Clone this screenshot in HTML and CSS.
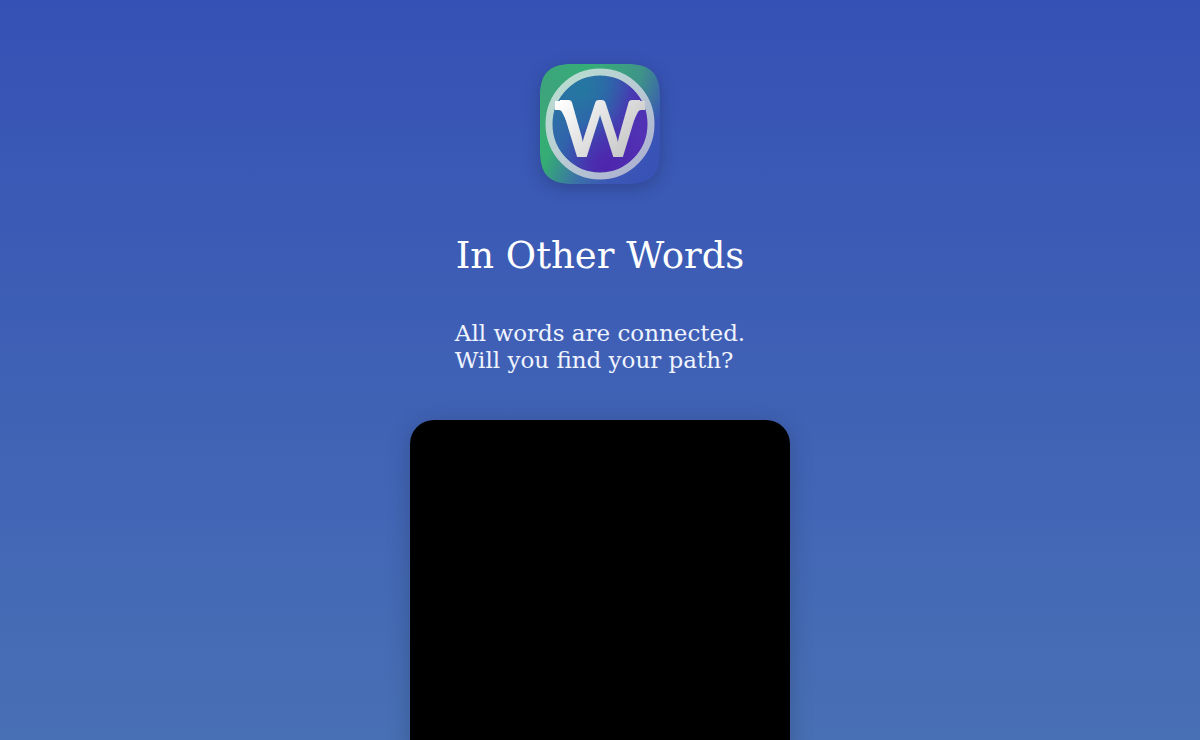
FILE: index.html
```
<!DOCTYPE html>
<html lang="en">
<head>
  <meta charset="UTF-8" />
  <meta name="viewport" content="width=device-width, initial-scale=1.0"/>
  <title>In Other Words</title>
  <link rel="stylesheet" href="styles.css">
</head>
<body>
  <main class="container">
    <svg class="app-icon" viewBox="0 0 120 120" role="img" aria-label="In Other Words app icon">
      <defs>
        <clipPath id="iconShape">
          <path d="M0 34C0 9 9 0 34 0H86C111 0 120 9 120 34V86C120 111 111 120 86 120H34C9 120 0 111 0 86Z" />
        </clipPath>
        <clipPath id="disc">
          <ellipse cx="60" cy="60" rx="50" ry="52" />
        </clipPath>
        <linearGradient id="base" x1="0" y1="0.3" x2="1" y2="0.7">
          <stop offset="0" stop-color="#35b56c" />
          <stop offset="0.22" stop-color="#35ab76" />
          <stop offset="0.5" stop-color="#3b70a8" />
          <stop offset="0.7" stop-color="#3b58b6" />
          <stop offset="1" stop-color="#3852b6" />
        </linearGradient>
        <radialGradient id="topGlow" cx="0.4" cy="0" r="0.75">
          <stop offset="0" stop-color="#35ae78" />
          <stop offset="0.6" stop-color="#3fa07e" stop-opacity="0.8" />
          <stop offset="1" stop-color="#3fa07e" stop-opacity="0" />
        </radialGradient>
        <linearGradient id="inner" x1="0" y1="0.3" x2="1" y2="0.7">
          <stop offset="0" stop-color="#2c76a2" />
          <stop offset="0.4" stop-color="#315fae" />
          <stop offset="0.7" stop-color="#4b33b2" />
          <stop offset="1" stop-color="#5c2eb8" />
        </linearGradient>
        <radialGradient id="teal" cx="0.35" cy="0.2" r="0.4">
          <stop offset="0" stop-color="#2478a0" />
          <stop offset="1" stop-color="#2478a0" stop-opacity="0" />
        </radialGradient>
        <radialGradient id="violet" cx="0.55" cy="0.85" r="0.4">
          <stop offset="0" stop-color="#4e25ad" />
          <stop offset="1" stop-color="#4e25ad" stop-opacity="0" />
        </radialGradient>
        <linearGradient id="ring" x1="0" y1="0" x2="1" y2="1">
          <stop offset="0" stop-color="#b8e0cf" />
          <stop offset="0.5" stop-color="#b9cbd4" />
          <stop offset="1" stop-color="#a9abd0" />
        </linearGradient>
        <linearGradient id="letter" gradientUnits="userSpaceOnUse" x1="20" y1="36" x2="90" y2="96">
          <stop offset="0" stop-color="#ffffff" />
          <stop offset="1" stop-color="#c3c3c3" />
        </linearGradient>
      </defs>
      <g clip-path="url(#iconShape)">
        <rect width="120" height="120" fill="url(#base)" />
        <rect width="120" height="120" fill="url(#topGlow)" />
        <g clip-path="url(#disc)">
          <rect width="120" height="120" fill="url(#inner)" />
          <rect width="120" height="120" fill="url(#teal)" />
          <rect width="120" height="120" fill="url(#violet)" />
        </g>
        <ellipse cx="60" cy="60" rx="51" ry="52" fill="none" stroke="url(#ring)" stroke-width="7" />
        <path d="M15 37H26V56L22 48Q21 46 19 46H15Z" fill="url(#letter)" />
        <path d="M105 37H94V56L98 48Q99 46 101 46H105Z" fill="url(#letter)" />
        <text class="icon-letter" x="60" y="93" fill="url(#letter)">W</text>
      </g>
    </svg>

    <h1>In Other Words</h1>

    <p class="tagline">All words are connected.<br>Will you find your path?</p>

    <video class="preview" playsinline muted loop></video>
  </main>
</body>
</html>
```
FILE: styles.css
```
body {
  margin: 0;
  font-family: 'DejaVu Serif', serif;
  color: white;
  background: linear-gradient(#3651b5, #4870b5) fixed;
}

.container {
  display: flex;
  flex-direction: column;
  align-items: center;
  padding: 64px 16px;
}

.app-icon {
  width: 120px;
  height: 120px;
  filter: drop-shadow(0 4px 8px rgba(0, 0, 0, 0.2));
}

.icon-letter {
  font-family: 'Lato', sans-serif;
  font-size: 78px;
  font-weight: bold;
  text-anchor: middle;
}

h1 {
  margin: 48px 0 40px;
  font-size: 37px;
  font-weight: normal;
  line-height: 48px;
}

.tagline {
  margin: 0 0 46px;
  font-size: 23px;
  line-height: 27px;
  color: #f0f4ff;
}

.preview {
  width: 100%;
  max-width: 380px;
  aspect-ratio: 9 / 19;
  background: black;
  border-radius: 24px;
  box-shadow: 0 4px 24px rgba(0, 0, 0, 0.2);
}
```
